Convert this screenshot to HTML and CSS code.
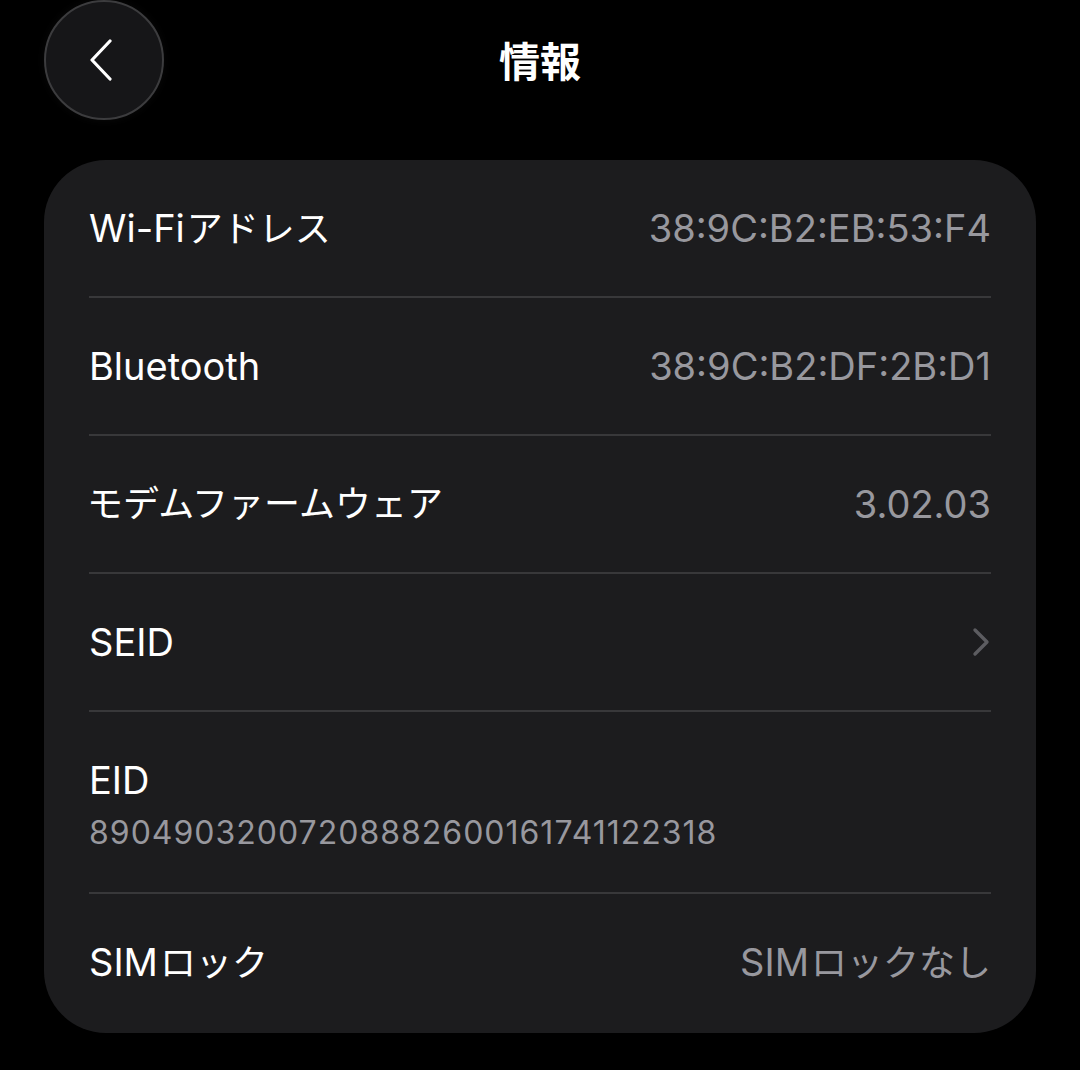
FILE: index.html
```html
<!DOCTYPE html>
<html lang="ja">
<head>
  <meta charset="UTF-8" />
  <title>情報</title>
  <meta name="viewport" content="width=device-width, initial-scale=1" />
  <link rel="stylesheet" href="styles.css">
</head>
<body>

<header class="topbar">
  <button class="back" aria-label="戻る">
    <svg width="26" height="42" viewBox="0 0 26 42"><path d="M22 2 L4 21 L22 40" fill="none" stroke="#fff" stroke-width="3.2" stroke-linecap="round" stroke-linejoin="round"/></svg>
  </button>
  <h1 class="title">情報</h1>
  <span class="spacer"></span>
</header>

<div class="card">
  <div class="row">
    <span class="label">Wi-Fi<span class="ja">アドレス</span></span>
    <span class="value">38:9C:B2:EB:53:F4</span>
  </div>
  <div class="row">
    <span class="label">Bluetooth</span>
    <span class="value">38:9C:B2:DF:2B:D1</span>
  </div>
  <div class="row">
    <span class="label ja-only">モデムファームウェア</span>
    <span class="value">3.02.03</span>
  </div>
  <div class="row">
    <span class="label">SEID</span>
    <svg class="chev" width="18" height="30" viewBox="0 0 18 30"><path d="M3 3 L15 15 L3 27" fill="none" stroke="#5c5c60" stroke-width="3.4" stroke-linecap="round" stroke-linejoin="round"/></svg>
  </div>
  <div class="row stack">
    <span class="label">EID</span>
    <span class="sub">89049032007208882600161741122318</span>
  </div>
  <div class="row">
    <span class="label">SIM<span class="ja">ロック</span></span>
    <span class="value">SIM<span class="ja">ロックなし</span></span>
  </div>
</div>

</body>
</html>
```

FILE: styles.css
```css
body { margin: 0; background: #000; color: #fff; font-family: Inter, "Noto Sans CJK JP", sans-serif; width: 1080px; height: 1070px; overflow: hidden; }

.topbar { display: grid; grid-template-columns: 120px 1fr 120px; align-items: center; height: 120px; padding: 0 44px; margin-bottom: 40px; }
.back { width: 120px; height: 120px; border-radius: 50%; background: #161618; border: 2px solid #3c3c3e; display: flex; align-items: center; justify-content: center; padding: 0 6px 0 0; box-shadow: 0 0 10px rgba(255,255,255,0.04); }
.title { margin: 0; text-align: center; font-family: "Noto Sans CJK JP", sans-serif; font-size: 41px; font-weight: 700; padding-bottom: 2px; }

.card { margin: 0 44px; background: #1c1c1e; border-radius: 62px; padding: 0 45px; height: 873px; box-sizing: border-box; }
.row { display: flex; align-items: center; justify-content: space-between; height: 138px; border-bottom: 2px solid #38383a; box-sizing: border-box; }
.row:last-child { border-bottom: none; height: 137px; }
.row.stack { flex-direction: column; align-items: flex-start; justify-content: flex-start; height: 182px; padding-top: 46px; }

.label { font-size: 38px; line-height: 44px; }
.label.ja-only { font-size: 36px; margin-left: -2px; }
.value { font-size: 38px; line-height: 44px; color: #98989e; }
.ja { font-size: 36px; margin-left: 2px; }
.sub { font-size: 32px; line-height: 38px; color: #98989e; margin-top: 12px; letter-spacing: 1px; }
.chev { margin-right: 1px; }
```
